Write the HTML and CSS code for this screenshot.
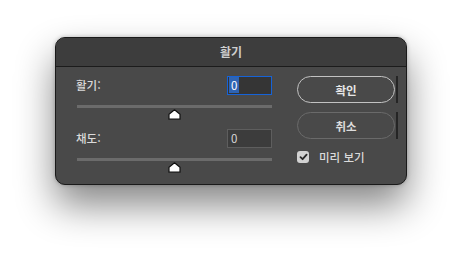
FILE: index.html
```html
<!DOCTYPE html>
<html lang="ko">
<head>
<meta charset="UTF-8">
<title>활기</title>
<link rel="stylesheet" href="styles.css">
</head>
<body>
<div class="dialog">
    <div class="title-bar">활기</div>
    <div class="dialog-body">
        <div class="controls">
            <div class="group">
                <div class="field">
                    <span class="label">활기:</span>
                    <div class="num-input active"><span class="selected">0</span></div>
                </div>
                <div class="slider">
                    <div class="track"></div>
                    <svg class="thumb" width="13" height="11" viewBox="0 0 13 11"><path d="M6.5 0.8 L12 5.2 V10.2 H1 V5.2 Z" fill="#fff" stroke="#111" stroke-width="1.2" stroke-linejoin="round"/></svg>
                </div>
            </div>
            <div class="group">
                <div class="field">
                    <span class="label">채도:</span>
                    <div class="num-input">0</div>
                </div>
                <div class="slider">
                    <div class="track"></div>
                    <svg class="thumb" width="13" height="11" viewBox="0 0 13 11"><path d="M6.5 0.8 L12 5.2 V10.2 H1 V5.2 Z" fill="#fff" stroke="#111" stroke-width="1.2" stroke-linejoin="round"/></svg>
                </div>
            </div>
        </div>
        <div class="actions">
            <div class="btn-row">
                <button class="btn btn-primary">확인</button>
                <span class="edge"></span>
            </div>
            <div class="btn-row">
                <button class="btn">취소</button>
                <span class="edge"></span>
            </div>
            <label class="preview">
                <span class="checkbox">
                    <svg width="9" height="8" viewBox="0 0 9 8"><path d="M1.5 4.2 L3.6 6.2 L7.6 1.6" fill="none" stroke="#2a2a2a" stroke-width="1.8" stroke-linecap="round" stroke-linejoin="round"/></svg>
                </span>
                미리 보기
            </label>
        </div>
    </div>
</div>
</body>
</html>
```
FILE: styles.css
```css
* {
    box-sizing: border-box;
    font-family: "Noto Sans CJK KR", "Noto Sans", sans-serif;
}
body {
    margin: 0;
    padding: 37px 0 0 55px;
    background: #fff;
    width: 462px;
    height: 258px;
    overflow: hidden;
}
.dialog {
    width: 352px;
    height: 148px;
    background-color: #494949;
    border: 1px solid #1a1a1a;
    border-radius: 10px;
    overflow: hidden;
    box-shadow: 0 20px 38px rgba(0, 0, 0, 0.48), 0 0 4px rgba(0, 0, 0, 0.25);
}
.title-bar {
    height: 29px;
    background-color: #3d3d3d;
    border-bottom: 1px solid #1c1c1c;
    color: #cdcdcd;
    font-size: 12px;
    font-weight: bold;
    text-align: center;
    line-height: 27px;
}
.dialog-body {
    display: flex;
    padding: 9px 8px 0 20px;
}
.controls {
    width: 197px;
}
.group {
    height: 53px;
}
.field {
    display: flex;
    justify-content: space-between;
    align-items: center;
    height: 19px;
}
.label {
    color: #dadada;
    font-size: 11.5px;
    font-weight: 500;
    margin-top: -1px;
}
.num-input {
    width: 45px;
    height: 19px;
    background-color: #3c3c3c;
    border: 1px solid #5e5e5e;
    color: #d8d8d8;
    font-size: 11.5px;
    line-height: 17px;
    padding-left: 3px;
}
.num-input.active {
    background-color: #353535;
    border: 1.5px solid #1663d8;
    padding-left: 1px;
    line-height: 16px;
}
.selected {
    display: inline-block;
    background-color: #2f64b3;
    color: #fff;
    padding: 0 2px;
}
.slider {
    position: relative;
    margin-top: 10px;
}
.track {
    height: 3px;
    background-color: #6b6b6b;
    margin-left: 1px;
}
.thumb {
    display: block;
    margin: 1px auto 0;
}
.actions {
    margin-left: 25px;
}
.btn-row {
    display: flex;
    align-items: stretch;
    height: 27px;
    margin-bottom: 9px;
}
.btn {
    width: 98px;
    height: 27px;
    border-radius: 14px;
    background: transparent;
    border: 1.5px solid #6a6a6a;
    color: #dcdcdc;
    font-size: 11.5px;
    font-weight: bold;
    padding: 0;
}
.btn-primary {
    border-color: #c2c2c2;
    color: #e6e6e6;
}
.edge {
    width: 2px;
    margin-left: 1px;
    background-color: #252525;
}
.preview {
    display: flex;
    align-items: center;
    color: #dadada;
    font-size: 11.5px;
    font-weight: 500;
    margin-top: 10px;
    gap: 10px;
}
.checkbox {
    width: 12px;
    height: 12px;
    border-radius: 3px;
    background-color: #d2d2d2;
    display: flex;
    align-items: center;
    justify-content: center;
}
```
